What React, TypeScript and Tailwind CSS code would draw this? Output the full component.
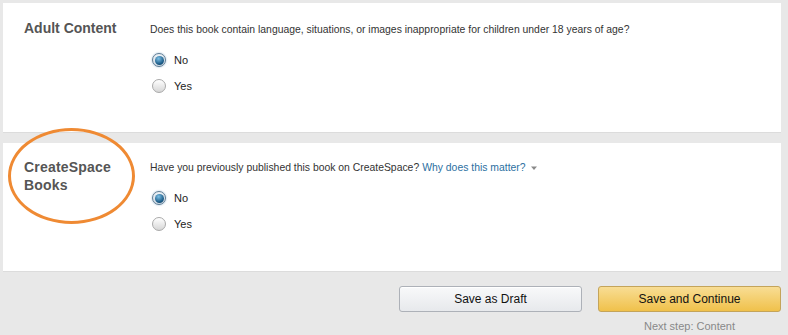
import React from "react";

function Radio({ checked, label }: { checked?: boolean; label: string }) {
  return (
    <div className="flex items-center gap-[8px] h-[16px]">
      <span
        className={
          "w-[14px] h-[14px] rounded-full border flex items-center justify-center " +
          (checked
            ? "border-[#5d7a92] bg-[linear-gradient(#eef3f7,#cfdbe5)] shadow-[0_0_2px_#8fb3cf]"
            : "border-[#a9a9a9] bg-[linear-gradient(#ffffff,#d6d6d6)]")
        }
      >
        {checked && (
          <span className="w-[9px] h-[9px] rounded-full bg-[radial-gradient(circle_at_40%_30%,#7cc0e6,#1a5a86_65%,#0c3553)]" />
        )}
      </span>
      <span className="text-[11px] text-[#222]">{label}</span>
    </div>
  );
}

export default function App() {
  return (
    <div
      className="relative w-[788px] h-[335px] bg-[#e8e8e8] overflow-hidden"
      style={{ fontFamily: '"Liberation Sans", Arial, sans-serif' }}
    >
      <div className="pt-[3px] pl-[3px] pr-[7px] flex flex-col gap-[10px]">
        <div className="bg-white h-[130px] flex border-b border-[#dcdcdc]">
          <div className="w-[147px] pl-[21px] pt-[16px] text-[14px] font-bold text-[#555] leading-[18px]">
            Adult Content
          </div>
          <div className="pt-[20px] flex flex-col">
            <div className="text-[10.4px] text-[#333] leading-[14px]">
              Does this book contain language, situations, or images inappropriate for children under 18 years of age?
            </div>
            <div className="mt-[15px] pl-[2px] flex flex-col gap-[10px]">
              <Radio checked label="No" />
              <Radio label="Yes" />
            </div>
          </div>
        </div>
        <div className="bg-white h-[129px] flex border-b border-[#dcdcdc]">
          <div className="w-[147px] pl-[21px] pt-[15px] text-[14px] font-bold text-[#555] leading-[18px] tracking-[0.2px]">
            CreateSpace
            <br />
            Books
          </div>
          <div className="pt-[18px] flex flex-col">
            <div className="text-[10.4px] text-[#333] leading-[14px] flex items-center">
              Have you previously published this book on CreateSpace?
              <span className="ml-[3px] text-[#2c6f9f]">Why does this matter?</span>
              <svg width="7" height="5" viewBox="0 0 7 5" className="ml-[5px]">
                <path d="M0 0.5 L6 0.5 L3 4 Z" fill="#8a8a8a" />
              </svg>
            </div>
            <div className="mt-[15px] pl-[2px] flex flex-col gap-[10px]">
              <Radio checked label="No" />
              <Radio label="Yes" />
            </div>
          </div>
        </div>
        <div className="flex justify-end gap-[16px] pt-[4px]">
          <div className="flex flex-col items-center">
            <button className="w-[183px] h-[26px] rounded-[3px] border border-[#adb1b8] bg-[linear-gradient(#f8f9fa,#e7e9ec)] text-[12px] text-[#111] shadow-[inset_0_1px_0_#fff]">
              Save as Draft
            </button>
          </div>
          <div className="flex flex-col items-center">
            <button className="w-[183px] h-[26px] rounded-[3px] border border-[#c4a45a] bg-[linear-gradient(#f8dd94,#f0c14b)] text-[12px] text-[#111]">
              Save and Continue
            </button>
            <div className="mt-[6px] text-[11px] text-[#888]">Next step: Content</div>
          </div>
        </div>
      </div>
      <div className="absolute left-[8px] top-[128px] w-[127px] h-[96px] rounded-[50%] border-[3px] border-[#ef8a33]" />
    </div>
  );
}
